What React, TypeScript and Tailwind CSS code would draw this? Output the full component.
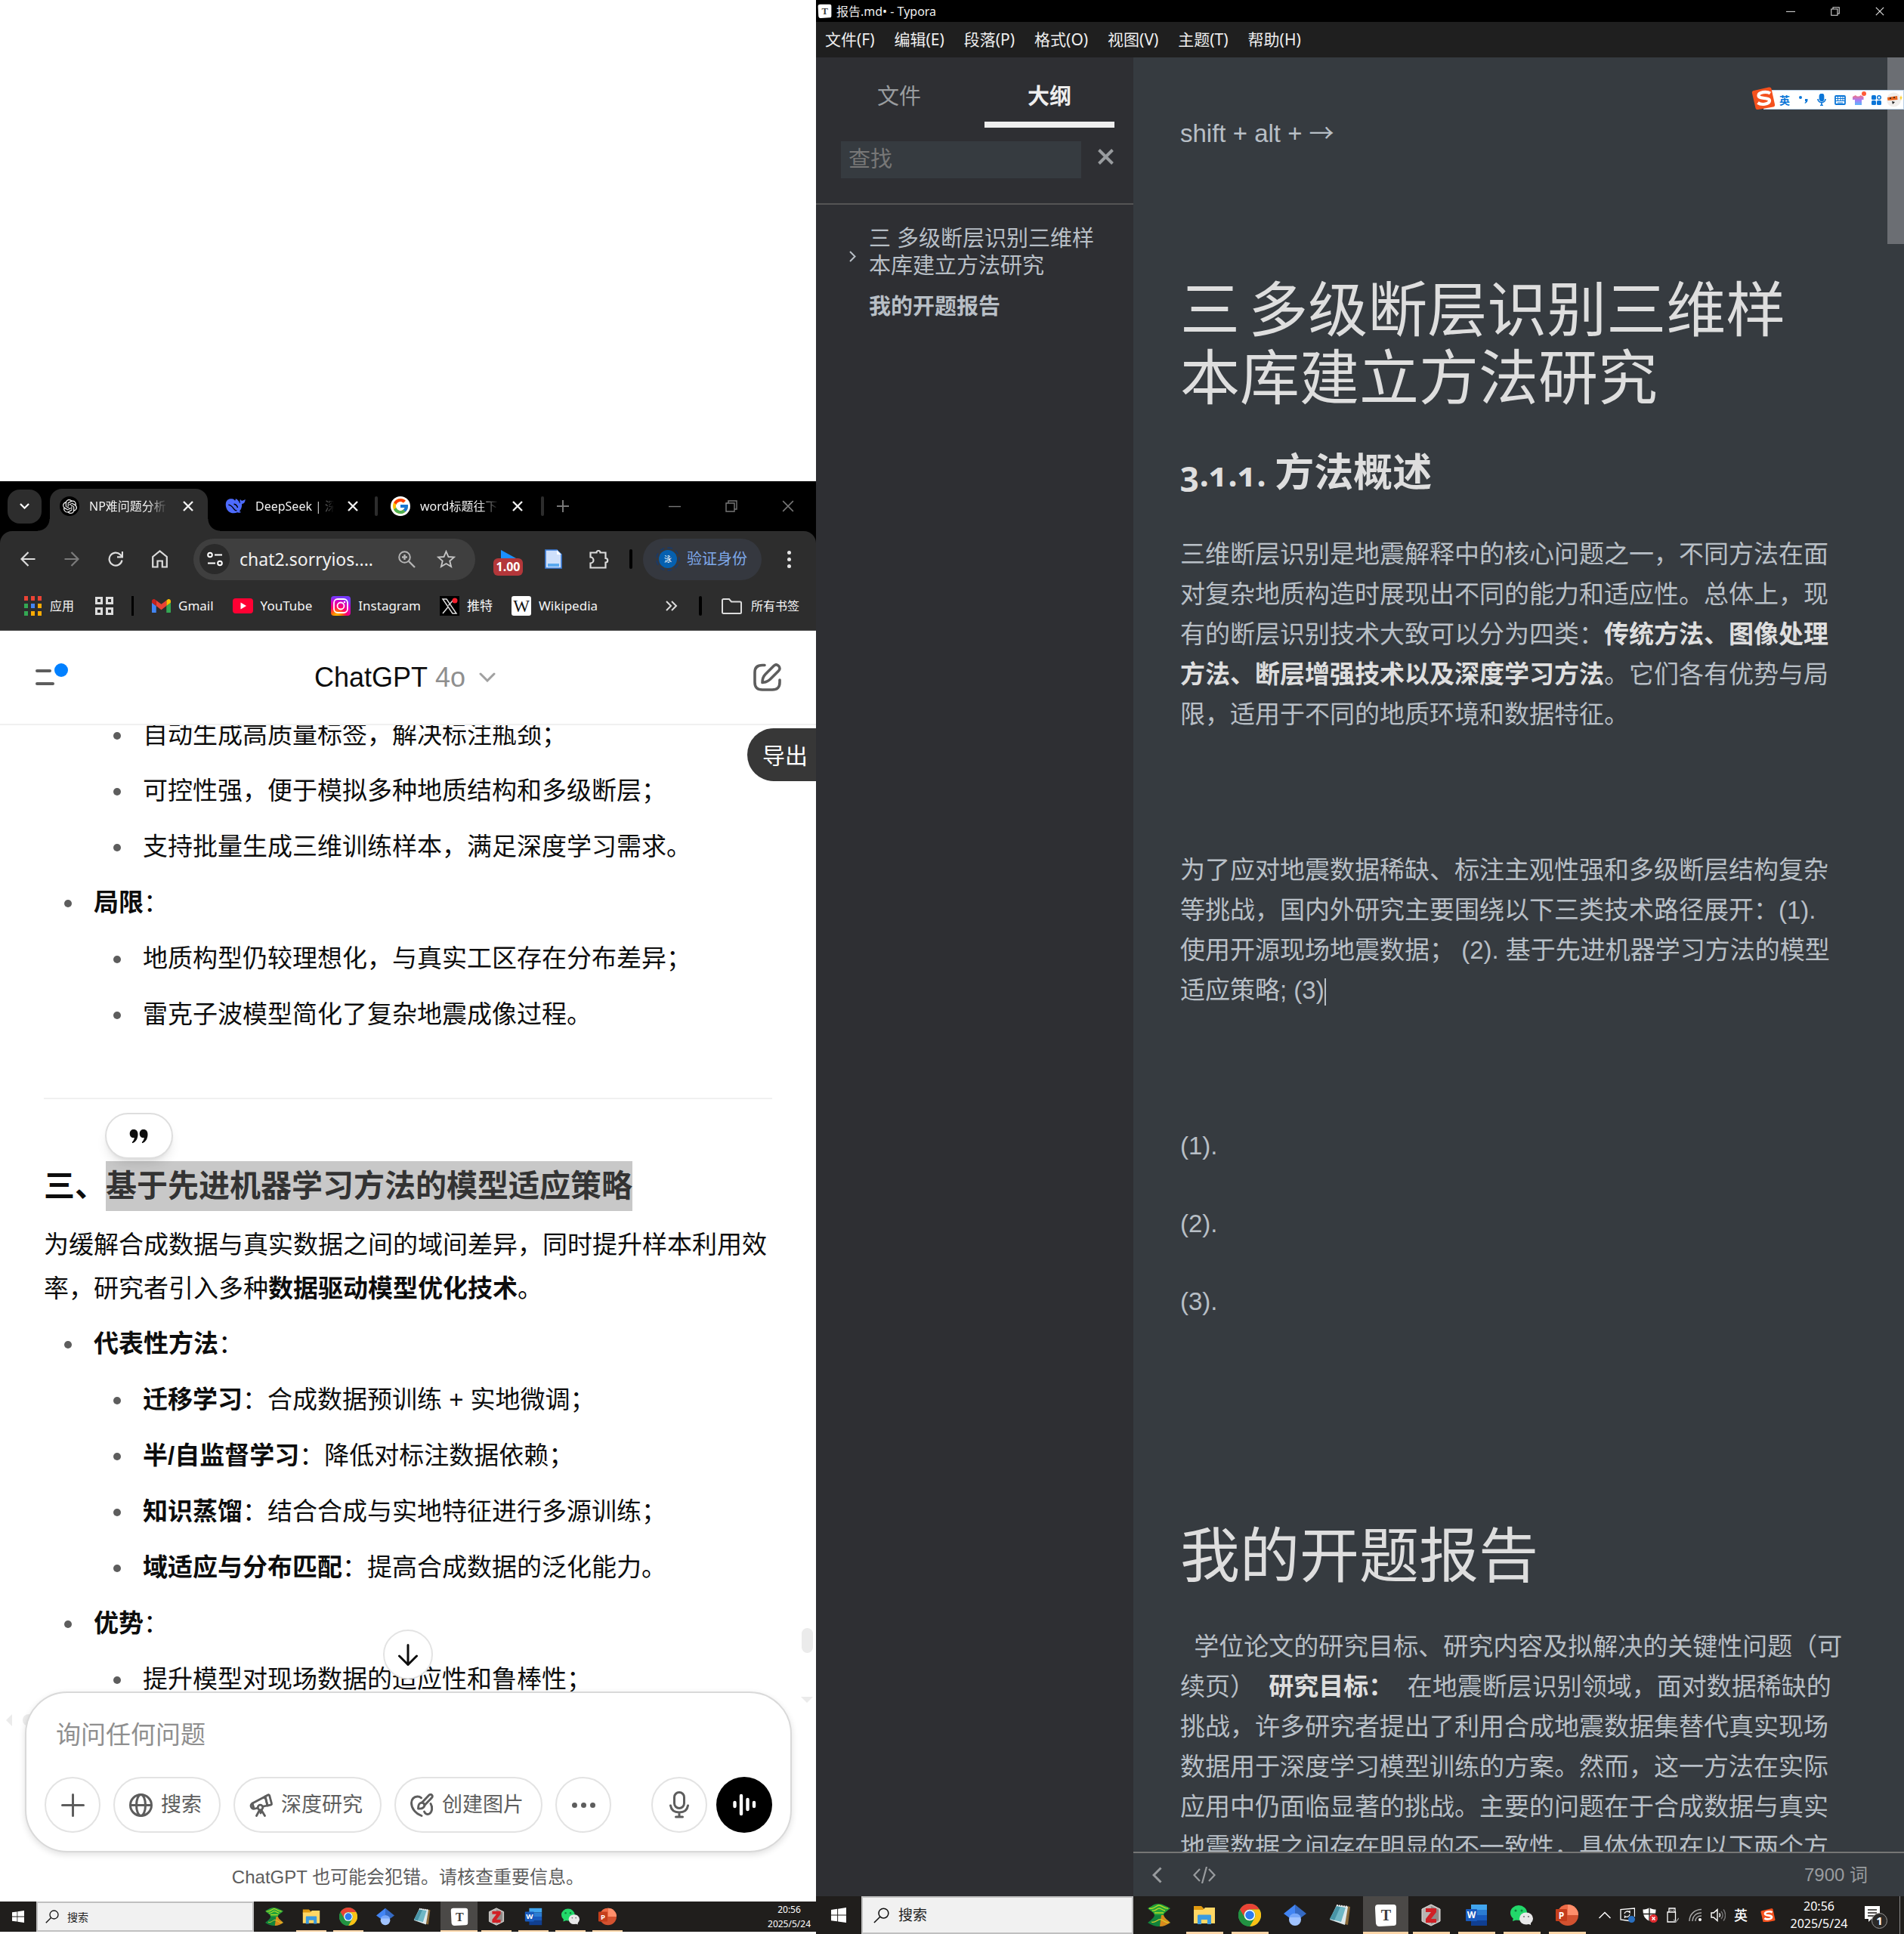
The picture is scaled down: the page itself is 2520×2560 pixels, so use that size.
import React from "react";
import { SiOpenai } from "react-icons/si";
import { FcGoogle } from "react-icons/fc";

const UI_FONT = "font-['Noto_Sans','Noto_Sans_CJK_SC',sans-serif]";
const BODY_FONT = "font-['Liberation_Sans','Noto_Sans_CJK_SC',sans-serif]";

type IconProps = { className?: string };

/* ---------- small line icons ---------- */

function CloseIcon({ className }: IconProps) {
  return (
    <svg viewBox="0 0 14 14" className={className} fill="none" stroke="currentColor">
      <path d="M1 1l12 12M13 1L1 13" />
    </svg>
  );
}

function MinimizeIcon({ className }: IconProps) {
  return (
    <svg viewBox="0 0 16 16" className={className} fill="none" stroke="currentColor">
      <path d="M0 8.500h16" strokeWidth="1.400" />
    </svg>
  );
}

function RestoreIcon({ className }: IconProps) {
  return (
    <svg viewBox="0 0 16 16" className={className} fill="none" stroke="currentColor" strokeWidth="1.400">
      <path d="M1 4h11v11H1zM4 4V1h11v11h-3" />
    </svg>
  );
}

function PlusIcon({ className }: IconProps) {
  return (
    <svg viewBox="0 0 16 16" className={className} fill="none" stroke="currentColor" strokeWidth="2">
      <path d="M8 0v16M0 8h16" />
    </svg>
  );
}

function ArrowIcon({ className }: IconProps) {
  return (
    <svg viewBox="0 0 20 20" className={className} fill="none" stroke="currentColor" strokeWidth="2.200">
      <path d="M19.500 10H1.500M10.500 1L1.500 10l9 9" />
    </svg>
  );
}

/* ---------- site and app logos ---------- */

function WhaleLogo({ className }: IconProps) {
  return (
    <svg viewBox="0 0 28 22" className={className}>
      <path
        fill="#4d6bfe"
        d="M1 7C2 2.500 6 .8 10.500 1.600c1.500.3 2.200 1.400 3 2.300.6-.8 1-1.600.7-2.600 1.900.3 3 1.500 3.800 2.700 1 .9 1.400 2 1.700 3.100.3.500.7.6 1 .2-.5-1.800-.5-3.300-.3-4.800C21.200 2.200 22 3.200 22.500 4c1.700-.2 3.200-1 5.200-2-.1 3.600-1.700 5.800-4.700 6.400.3 4.500-1.400 8-3.400 10l2.400 1.300c-2 .9-3.700.9-5.300.3-3.700 1.700-8.700 1.600-12-1.400C1.700 15.900.2 11 1 7z"
      />
      <path fill="none" stroke="#000" strokeWidth="1.500" d="M4.500 9.500c4 .5 6 3.500 7.500 5.700 1.200 1.700 2.300 2.500 4 2.300M12 8.500c3 .3 4.500 2.500 5.200 5" />
    </svg>
  );
}

function GmailLogo({ className }: IconProps) {
  return (
    <svg viewBox="0 0 24 18" className={className}>
      <path fill="#4285f4" d="M1.600 18H5.500V8.700L0 4.600v11.800C0 17.300.7 18 1.600 18z" />
      <path fill="#34a853" d="M18.500 18h3.900c.9 0 1.600-.7 1.600-1.600V4.600l-5.500 4.100z" />
      <path fill="#fbbc04" d="M18.500 1.600v7.100L24 4.600V2.500c0-2-2.300-3.200-3.900-2z" />
      <path fill="#ea4335" d="M5.500 8.700V1.600L12 6.500l6.500-4.900v7.100L12 13.600z" />
      <path fill="#c5221f" d="M0 2.500v2.100l5.500 4.100V1.600L3.900.5C2.300-.7 0 .5 0 2.500z" />
    </svg>
  );
}

function YouTubeLogo({ className }: IconProps) {
  return (
    <svg viewBox="0 0 27 20" className={className}>
      <rect width="27" height="20" rx="4" fill="#ff0033" />
      <path d="M10.500 5.500v9l7.500-4.500z" fill="#fff" />
    </svg>
  );
}

function InstagramLogo({ className }: IconProps) {
  return (
    <svg viewBox="0 0 26 26" className={className}>
      <defs>
        <radialGradient id="ig-warm" cx=".3" cy="1.050" r="1">
          <stop offset="0" stopColor="#ffd600" />
          <stop offset=".25" stopColor="#ff7a00" />
          <stop offset=".5" stopColor="#ff0069" />
          <stop offset=".8" stopColor="#d300c5" />
          <stop offset="1" stopColor="#7638fa" />
        </radialGradient>
      </defs>
      <rect width="26" height="26" rx="4" fill="url(#ig-warm)" />
      <rect x="4" y="4" width="18" height="18" rx="5" fill="none" stroke="#fff" strokeWidth="1.800" />
      <circle cx="13" cy="13" r="4.500" fill="none" stroke="#fff" strokeWidth="1.800" />
      <circle cx="18" cy="8" r="1.200" fill="#fff" />
    </svg>
  );
}

function XLogo({ className }: IconProps) {
  return (
    <svg viewBox="0 0 26 26" className={className}>
      <rect width="26" height="26" fill="#000" />
      <path d="M4 4h5l13 19h-5z" fill="none" stroke="#ddd" strokeWidth="1.500" />
      <path d="M19 4l-7.500 8.500M11 14.500L4 23" stroke="#ddd" strokeWidth="1.500" />
      <circle cx="20" cy="6" r="3.500" fill="#f4212e" />
    </svg>
  );
}

function WikipediaLogo({ className }: IconProps) {
  return (
    <svg viewBox="0 0 26 26" className={className}>
      <rect width="26" height="26" rx="3" fill="#fff" />
      <text x="13" y="21" textAnchor="middle" fontSize="23" fontFamily="Liberation Serif" fill="#111">
        W
      </text>
    </svg>
  );
}

/* ---------- task bar icons ---------- */

function HourglassApp() {
  return (
    <svg viewBox="0 0 30 30" className="size-full">
      <path d="M0 6C5 3 9 0 14 0s10 3 16 6c-3 3-8 5-9 9H9C8 11 3 9 0 6z" fill="#22a33a" />
      <path d="M9 15h12c1 4 6 7 9 10-6 3-10 5-15 5S5 28 0 25c4-3 8-6 9-10z" fill="#12833b" />
      <path d="M18 15h3c1 4 6 7 9 10-5 3-9 5-14 5z" fill="#d98a1c" />
      <path d="M2 6c6 2 9-4 13-4s7 5 12 4M6 9c5 1 6-3 9-3s5 3 8 3M9 12h12" fill="none" stroke="#b8d928" strokeWidth="1.400" />
      <path d="M5 24c6 2 8-5 13-3s5 4 10 4" fill="none" stroke="#d7cf2c" strokeWidth="1.200" />
    </svg>
  );
}

function ExplorerApp() {
  return (
    <svg viewBox="0 0 30 30" className="size-full">
      <path d="M1 3h10l3 3v4H1z" fill="#e09a10" />
      <path d="M1 8h12l3-3h13v21H1z" fill="#ffd765" />
      <path d="M6 27V16c0-1 .6-1.500 1.500-1.500h15c.9 0 1.500.5 1.500 1.500v11h-5v-6h-8v6z" fill="#3a9be0" />
    </svg>
  );
}

function ChromeApp() {
  return (
    <svg viewBox="0 0 30 30" className="size-full">
      <circle cx="15" cy="15" r="15" fill="#34a853" />
      <path d="M2 7.500A15 15 0 0 1 28 7.500H15a7.500 7.500 0 0 0-6.500 11.200z" fill="#ea4335" />
      <path d="M28 7.500A15 15 0 0 1 15 30l6.500-11.200A7.500 7.500 0 0 0 15 7.500z" fill="#fbc116" />
      <path d="M2 7.500l6.500 11.300a7.500 7.500 0 0 0 13 0L15 30A15 15 0 0 1 2 7.500z" fill="#229342" />
      <circle cx="15" cy="15" r="7.300" fill="#fff" />
      <circle cx="15" cy="15" r="5.800" fill="#2b7bf0" />
    </svg>
  );
}

function ScholarApp() {
  return (
    <svg viewBox="0 0 30 30" className="size-full">
      <path d="M15 1L0 13l8 6c1-4 4-6 7-6z" fill="#4285f4" />
      <path d="M15 1l15 12-8 6c-1-4-4-6-7-6z" fill="#356ac3" />
      <circle cx="15" cy="21" r="8" fill="#a0c3ff" />
      <path d="M7.500 18a8 8 0 0 1 15 0z" fill="#76a7fa" />
    </svg>
  );
}

function NotebookApp() {
  return (
    <svg viewBox="0 0 30 30" className="size-full">
      <path d="M24 3l4 1-3 24-4-1z" fill="#8a6a3a" />
      <path d="M10 2l15 2-4 24L1 21z" fill="#dfe9ec" />
      <path d="M10 3l12 2-6 19L1 20z" fill="#6fb7c6" />
      <path d="M10 3l5 1-8 18-6-2z" fill="#2f7f92" opacity=".6" />
      <path d="M10 2l15 2" stroke="#eee" strokeWidth="2" strokeDasharray="2 1" />
    </svg>
  );
}

function TyporaApp() {
  return (
    <svg viewBox="0 0 30 30" className="size-full">
      <path d="M6 1h19c3 0 4 1 4 4v20c0 3-1 4-4 4L7 30c-3 0-4-1-5-4L1 6c0-4 1-5 5-5z" fill="#fff" />
      <text x="15.500" y="22" textAnchor="middle" fontSize="20" fontFamily="Liberation Serif" fontWeight="700" fill="#3c3c3c">
        T
      </text>
    </svg>
  );
}

function ZoteroApp() {
  return (
    <svg viewBox="0 0 30 30" className="size-full">
      <path d="M15 1l12 6v16l-12 6-12-6V7z" fill="#b9b4b2" stroke="#e5e2e0" strokeWidth="1" />
      <path d="M15 3l10 5v14l-10 5z" fill="#8f8a88" />
      <path d="M8 6h14v5l-7 9h7v5H8v-5l7-9H8z" fill="#d12026" />
    </svg>
  );
}

function WordApp() {
  return (
    <svg viewBox="0 0 30 30" className="size-full">
      <path d="M8 1h21v7H8z" fill="#41a5ee" />
      <path d="M8 8h21v7H8z" fill="#2b7cd3" />
      <path d="M8 15h21v7H8z" fill="#185abd" />
      <path d="M8 22h21v7H8z" fill="#103f91" />
      <rect x="1" y="7" width="15" height="16" rx="1" fill="#185abd" />
      <text x="8.500" y="19" textAnchor="middle" fontSize="12" fontFamily="Open Sans" fontWeight="700" fill="#fff">
        W
      </text>
    </svg>
  );
}

function WeChatApp() {
  return (
    <svg viewBox="0 0 30 30" className="size-full">
      <ellipse cx="11" cy="12" rx="11" ry="10" fill="#22d86a" />
      <path d="M4 18l-1 5 6-2z" fill="#22d86a" />
      <circle cx="7" cy="9" r="1.500" fill="#11803c" />
      <circle cx="15" cy="9" r="1.500" fill="#11803c" />
      <ellipse cx="21" cy="19.500" rx="9" ry="8" fill="#e8e8e8" />
      <path d="M27 24v4l-5-2z" fill="#e8e8e8" />
      <circle cx="18" cy="17" r="1.100" fill="#777" />
      <circle cx="24" cy="17" r="1.100" fill="#777" />
    </svg>
  );
}

function PowerPointApp() {
  return (
    <svg viewBox="0 0 30 30" className="size-full">
      <circle cx="16" cy="15" r="14" fill="#d35230" />
      <path d="M16 1a14 14 0 0 1 14 14H16z" fill="#ff8f6b" />
      <path d="M16 1v14H2A14 14 0 0 1 16 1z" fill="#ed6c47" />
      <rect x="0" y="7" width="15" height="16" rx="1" fill="#c43e1c" />
      <text x="7.500" y="19.500" textAnchor="middle" fontSize="12" fontFamily="Open Sans" fontWeight="700" fill="#fff">
        P
      </text>
    </svg>
  );
}

function SogouLogo({ className }: IconProps) {
  return (
    <svg viewBox="0 0 32 30" className={className}>
      <path d="M3 5L23 .5c2-.4 3 .2 3.500 2L31 23c.4 2-.3 3-2 3.500L9 30c-2 .3-3-.3-3.500-2L1 8.500C.6 6.500 1.200 5.500 3 5z" fill="#f4511e" />
      <path
        d="M25 8.500C20 5.500 9.500 7 9.500 11.500c0 5 15 2 14.500 7C23.500 23 13 24.500 8.500 21"
        fill="none"
        stroke="#fff"
        strokeWidth="4.200"
      />
    </svg>
  );
}

function WindowsLogo({ className }: IconProps) {
  return (
    <svg viewBox="0 0 16 16" className={className} fill="#fff">
      <path d="M0 2.300L6.500 1.400v6.200H0zM7.300 1.300L16 0v7.600H7.300zM0 8.400h6.500v6.200L0 13.700zM7.300 8.400H16V16l-8.700-1.200z" />
    </svg>
  );
}

const taskApps = [
  { name: "沙漏", Icon: HourglassApp, open: false, active: false },
  { name: "文件资源管理器", Icon: ExplorerApp, open: true, active: false },
  { name: "Chrome", Icon: ChromeApp, open: true, active: false },
  { name: "Scholar", Icon: ScholarApp, open: false, active: false },
  { name: "记事本", Icon: NotebookApp, open: false, active: false },
  { name: "Typora", Icon: TyporaApp, open: true, active: true },
  { name: "Zotero", Icon: ZoteroApp, open: true, active: false },
  { name: "Word", Icon: WordApp, open: true, active: false },
  { name: "微信", Icon: WeChatApp, open: true, active: false },
  { name: "PowerPoint", Icon: PowerPointApp, open: true, active: false },
];

function Taskbar({ large = false, children }: { large?: boolean; children: React.ReactNode }) {
  const bar = large ? "h-[50px]" : "mb-[3px] h-10";
  const start = large ? "w-[60px]" : "w-12";
  const box = large ? "w-[360px] gap-3 pl-[14px] text-[19px]" : "w-[288px] gap-[11px] pl-[10px] text-[14px]";
  const apps = large ? "ml-1" : "ml-[2px]";
  const slot = large ? "w-[60px]" : "w-[49px]";
  const glyph = large ? "size-[30px]" : "size-6";
  const mark = large ? "h-[3px] w-[49px]" : "h-[2px] w-10";
  return (
    <footer className={`${UI_FONT} ${bar} flex shrink-0 bg-[#201e1c] text-white`}>
      <button aria-label="开始" className={`${start} flex shrink-0 items-center justify-center`}>
        <WindowsLogo className={large ? "size-5" : "size-4"} />
      </button>
      <label className={`${box} flex shrink-0 items-center border-2 border-[#c0c0c0] bg-[#f1f1f1] text-[#222]`}>
        <svg viewBox="0 0 18 18" className={large ? "size-[21px] shrink-0" : "size-[18px] shrink-0"} fill="none" stroke="#111" strokeWidth="1.300">
          <circle cx="11.500" cy="6.500" r="5.500" />
          <path d="M7.500 10.500L.8 17.200" />
        </svg>
        <input aria-label="搜索" placeholder="搜索" className="w-full min-w-0 bg-transparent outline-none placeholder:text-[#222]" />
      </label>
      <nav className={`${apps} flex`}>
        {taskApps.map(({ name, Icon, open, active }) => (
          <button
            key={name}
            aria-label={name}
            className={`${slot} relative flex items-center justify-center ${active ? "bg-[#4b4947]" : ""}`}
          >
            <span className={glyph}>
              <Icon />
            </span>
            {open && <span className={`${active ? (large ? "h-[3px] w-full" : "h-[2px] w-full") : mark} absolute bottom-0 bg-[#fcd5a8]`} />}
          </button>
        ))}
      </nav>
      {children}
    </footer>
  );
}

/* ---------- browser window ---------- */

function TabTitle({ children }: { children: React.ReactNode }) {
  return (
    <span className="ml-[13px] w-[104px] overflow-hidden whitespace-nowrap [mask-image:linear-gradient(to_right,black_75%,transparent)]">
      {children}
    </span>
  );
}

function TabStrip() {
  return (
    <div className="flex h-[66px] items-center bg-black text-[16px] text-[#f1f1f1]">
      <button aria-label="搜索标签页" className="ml-[10px] flex size-[45px] items-center justify-center rounded-2xl bg-[#2d2d2d]">
        <svg viewBox="0 0 14 9" className="w-[13px]" fill="none" stroke="#fff" strokeWidth="2.400">
          <path d="M1 1l6 6 6-6" />
        </svg>
      </button>
      <div className="relative ml-[11px] flex h-14 w-[209px] items-center self-end rounded-t-2xl bg-[#2d2d2d] pb-[10px] pl-[13px]">
        <span className="absolute bottom-0 -left-4 size-4 bg-[radial-gradient(circle_at_0_0,transparent_15px,#2d2d2d_16px)]" />
        <span className="absolute -right-4 bottom-0 size-4 bg-[radial-gradient(circle_at_100%_0,transparent_15px,#2d2d2d_16px)]" />
        <span className="flex size-[26px] shrink-0 items-center justify-center rounded-full bg-black">
          <SiOpenai className="size-[19px]" />
        </span>
        <TabTitle>NP难问题分析</TabTitle>
        <button aria-label="关闭" className="ml-5">
          <CloseIcon className="size-[14px] stroke-[2.4]" />
        </button>
      </div>
      <div className="flex items-center pl-[23px]">
        <WhaleLogo className="w-[27px]" />
        <TabTitle>DeepSeek | 深</TabTitle>
        <button aria-label="关闭" className="ml-[18px]">
          <CloseIcon className="size-[14px] stroke-[2.4]" />
        </button>
      </div>
      <span className="ml-[22px] h-[26px] w-1 rounded bg-[#2d2d2d]" />
      <div className="flex items-center pl-[17px]">
        <span className="flex size-[26px] items-center justify-center rounded-full bg-white">
          <FcGoogle className="size-6" />
        </span>
        <TabTitle>word标题往下</TabTitle>
        <button aria-label="关闭" className="ml-[18px]">
          <CloseIcon className="size-[14px] stroke-[2.4]" />
        </button>
      </div>
      <span className="ml-6 h-[26px] w-1 rounded bg-[#2d2d2d]" />
      <button aria-label="新标签页" className="ml-[17px] text-[#777]">
        <PlusIcon className="size-4" />
      </button>
      <div className="mr-[29px] ml-auto flex items-center gap-[59px] text-[#777]">
        <button aria-label="最小化">
          <MinimizeIcon className="size-4" />
        </button>
        <button aria-label="还原">
          <RestoreIcon className="size-4" />
        </button>
        <button aria-label="关闭窗口">
          <CloseIcon className="size-4 stroke-[1.3]" />
        </button>
      </div>
    </div>
  );
}

function Toolbar() {
  return (
    <div className="flex h-[74px] items-center text-[#dcdcdc]">
      <div className="ml-[27px] flex items-center gap-[38px]">
        <button aria-label="后退">
          <ArrowIcon className="size-5" />
        </button>
        <button aria-label="前进" className="text-[#7b7b7b]">
          <ArrowIcon className="size-5 rotate-180" />
        </button>
        <button aria-label="重新加载">
          <svg viewBox="0 0 20 20" className="size-5" fill="none" stroke="currentColor" strokeWidth="2.200">
            <path d="M18.500 11.500A8.500 8.500 0 1 1 16.300 4.200L19 7" />
            <path d="M19 0v7.300h-7" />
          </svg>
        </button>
        <button aria-label="主页">
          <svg viewBox="0 0 21 24" className="h-6 w-[21px]" fill="none" stroke="currentColor" strokeWidth="2.200">
            <path d="M1.200 9L10.500 1.500 19.800 9v13.500h-6v-8H7.500v8H1.200z" />
          </svg>
        </button>
      </div>
      <div className="ml-[34px] flex h-[55px] flex-1 items-center rounded-full bg-[#3f3f3f] pr-[26px] pl-2">
        <button aria-label="网站信息" className="flex size-10 shrink-0 items-center justify-center rounded-full bg-[#2a2a2a]">
          <svg viewBox="0 0 21 20" className="w-[21px]" fill="none" stroke="#fff" strokeWidth="2">
            <circle cx="4" cy="4.500" r="2.800" />
            <path d="M10 4.500h10M1 15.500h10" />
            <circle cx="17" cy="15.500" r="2.800" />
          </svg>
        </button>
        <input
          aria-label="地址栏"
          defaultValue="chat2.sorryios...."
          className="ml-[13px] w-full min-w-0 bg-transparent text-[23px] text-[#f1f1f1] outline-none"
        />
        <button aria-label="缩放" className="text-[#b5b5b5]">
          <svg viewBox="0 0 23 23" className="w-[23px]" fill="none" stroke="currentColor" strokeWidth="2">
            <circle cx="8.500" cy="8.500" r="7.300" />
            <path d="M14 14l8 8M8.500 5v7M5 8.500h7" strokeWidth="2.400" />
          </svg>
        </button>
        <button aria-label="收藏" className="ml-7 text-[#c5c5c5]">
          <svg viewBox="0 0 25 24" className="w-[25px]" fill="none" stroke="currentColor" strokeWidth="1.900">
            <path d="M12.500 2l3 7 7.500.6-5.700 5 1.800 7.400-6.600-4-6.600 4 1.800-7.400-5.700-5L9.500 9z" />
          </svg>
        </button>
      </div>
      <div className="mt-[9px] ml-[22px] flex w-[43px] flex-col items-center">
        <svg viewBox="0 0 20 11" className="h-[11px] w-5">
          <path d="M0 0l20 11H0z" fill="#1a90ff" />
        </svg>
        <span className="h-[23px] rounded-md bg-[#b3373a] px-1 text-[16px] leading-[23px] font-bold text-white">1.00</span>
      </div>
      <svg viewBox="0 0 23 26" className="ml-[27px] w-[23px]">
        <path d="M1 1h15l6 6v18H1z" fill="#cfe0fb" stroke="#3d7fdb" strokeWidth="1.600" />
        <path d="M16 1l6 6h-6z" fill="#fff" />
        <path d="M4 19h15v4H4z" fill="#5aa9f0" />
      </svg>
      <button aria-label="扩展程序" className="ml-9">
        <svg viewBox="0 0 26 26" className="w-[26px]" fill="none" stroke="currentColor" strokeWidth="2.200">
          <path d="M2 4.500h7.500a2.500 2.500 0 0 1 5 0H21.500v7.500a2.700 2.700 0 0 1 0 5.500V24.500H1.500v-6a4 4 0 0 0 0-8v-6z" />
        </svg>
      </button>
      <span className="ml-[27px] h-[26px] w-1 rounded bg-black" />
      <button className="ml-[14px] flex h-[55px] w-[157px] items-center rounded-full bg-[#35383f] pl-[17px] text-[20px] text-[#7fa9ea]">
        <span className="flex size-8 items-center justify-center rounded-full border-2 border-dashed border-[#1b3a66]">
          <span className="flex size-6 items-center justify-center rounded-full bg-[#0560b0] text-[10px] text-white">泳</span>
        </span>
        <span className="ml-[9px] whitespace-nowrap">验证身份</span>
      </button>
      <button aria-label="菜单" className="mr-[33px] ml-[34px] flex flex-col gap-1">
        <span className="size-[5px] rounded-full bg-[#e5e5e5]" />
        <span className="size-[5px] rounded-full bg-[#e5e5e5]" />
        <span className="size-[5px] rounded-full bg-[#e5e5e5]" />
      </button>
    </div>
  );
}

const appDots = [
  "bg-[#ea4335]", "bg-[#ea4335]", "bg-[#ea4335]",
  "bg-[#34a853]", "bg-[#4285f4]", "bg-[#fbab04]",
  "bg-[#34a853]", "bg-[#fbab04]", "bg-[#fbab04]",
];

const bookmarks = [
  { label: "Gmail", icon: <GmailLogo className="w-[25px]" /> },
  { label: "YouTube", icon: <YouTubeLogo className="w-[27px]" /> },
  { label: "Instagram", icon: <InstagramLogo className="w-[26px]" /> },
  { label: "推特", icon: <XLogo className="w-[26px]" /> },
  { label: "Wikipedia", icon: <WikipediaLogo className="w-[26px]" /> },
];

function BookmarksBar() {
  return (
    <div className="mb-[7px] flex h-[50px] items-center pr-[22px] pl-8 text-[16px] whitespace-nowrap text-[#f5f5f5]">
      <a href="#apps" className="flex items-center gap-[11px]">
        <span className="grid grid-cols-3 gap-[4px]">
          {appDots.map((dot, i) => (
            <span key={i} className={`h-[6px] w-[5px] ${dot}`} />
          ))}
        </span>
        应用
      </a>
      <button aria-label="标签页分组" className="ml-7 grid grid-cols-2 gap-1">
        <span className="size-[10px] border-[3px] border-[#dcdcdc]" />
        <span className="size-[10px] border-[3px] border-[#dcdcdc]" />
        <span className="size-[10px] border-[3px] border-[#dcdcdc]" />
        <span className="size-[10px] border-[3px] border-[#dcdcdc]" />
      </button>
      <span className="mr-6 ml-6 h-[26px] w-[3px] bg-black" />
      <div className="flex items-center gap-[25px] text-[17px]">
        {bookmarks.map((b) => (
          <a key={b.label} href={`#${b.label}`} className="flex items-center gap-[10px]">
            {b.icon}
            {b.label}
          </a>
        ))}
      </div>
      <button aria-label="更多书签" className="ml-auto">
        <svg viewBox="0 0 16 14" className="w-4" fill="none" stroke="#dcdcdc" strokeWidth="2">
          <path d="M1 1l6 6-6 6M8 1l6 6-6 6" />
        </svg>
      </button>
      <span className="mr-[26px] ml-[28px] h-[26px] w-1 rounded bg-black" />
      <a href="#all" className="flex items-center gap-3">
        <svg viewBox="0 0 27 21" className="w-[27px]" fill="none" stroke="#dcdcdc" strokeWidth="2">
          <path d="M2.500 1h7.500l3 3.500h11.500c.9 0 1.500.6 1.500 1.500v12.500c0 .9-.6 1.500-1.500 1.500h-22C1.600 20 1 19.400 1 18.500v-16C1 1.600 1.600 1 2.500 1z" />
        </svg>
        所有书签
      </a>
    </div>
  );
}

function ChatHeader() {
  return (
    <header className="grid h-[125px] shrink-0 grid-cols-[1fr_auto_1fr] items-center border-b-2 border-[#f0f0f0] bg-white px-[46px]">
      <button aria-label="打开边栏" className="relative flex w-11 flex-col gap-[13px] py-2 pl-px">
        <span className="h-1 w-[21px] rounded bg-[#5d5d5d]" />
        <span className="h-1 w-[25px] rounded bg-[#5d5d5d]" />
        <span className="absolute top-0 right-0 size-[18px] rounded-full bg-[#0180ff]" />
      </button>
      <button className="flex items-center gap-[10px] pr-2 text-[36px] text-[#0d0d0d]">
        ChatGPT <span className="text-[#8f8f8f]">4o</span>
        <svg viewBox="0 0 22 13" className="ml-2 w-[22px]" fill="none" stroke="#a0a0a0" strokeWidth="3" strokeLinecap="round">
          <path d="M2 2l9 9 9-9" />
        </svg>
      </button>
      <button aria-label="新聊天" className="justify-self-end">
        <svg viewBox="0 0 37 37" className="w-[37px]" fill="none" stroke="#5d5d5d" strokeWidth="3.600" strokeLinecap="round" strokeLinejoin="round">
          <path d="M15 2.500H12C5 2.500 2 5.500 2 12v13c0 7 3 10 10 10h13c7 0 10-3 10-10v-3" />
          <path d="M12 25.500c0-6 1.500-8.500 4-11L27 3.500c2-2 4.500-2 6.500 0s2 4.500 0 6.500L22.500 21c-2.500 2.500-4.500 4-10.500 4.500z" />
        </svg>
      </button>
    </header>
  );
}

function Bullet({ nested = false, children }: { nested?: boolean; children: React.ReactNode }) {
  return (
    <li className={`${nested ? "pl-[92px]" : "pl-[27px]"} flex gap-[29px]`}>
      <span className="mt-[25px] size-[10px] shrink-0 rounded-full bg-[#5d5d5d]" />
      <span>{children}</span>
    </li>
  );
}

function ChatMessages() {
  return (
    <article className="-mt-4 flex flex-col px-[58px] text-[33px] leading-[58px] text-[#0d0d0d]">
      <ul className="flex flex-col gap-4">
        <Bullet nested>自动生成高质量标签，解决标注瓶颈；</Bullet>
        <Bullet nested>可控性强，便于模拟多种地质结构和多级断层；</Bullet>
        <Bullet nested>支持批量生成三维训练样本，满足深度学习需求。</Bullet>
        <Bullet>
          <strong>局限</strong>：
        </Bullet>
        <Bullet nested>地质构型仍较理想化，与真实工区存在分布差异；</Bullet>
        <Bullet nested>雷克子波模型简化了复杂地震成像过程。</Bullet>
      </ul>
      <hr className="mt-[81px] border-t-2 border-[#f0f0f0]" />
      <h3 className="relative mt-[82px] text-[41px] leading-[66px] font-bold">
        三、<mark className="inline-block bg-[#c8c8c8] text-[#333]">基于先进机器学习方法的模型适应策略</mark>
        <button
          aria-label="引用"
          className="absolute -top-16 left-[81px] flex h-[61px] w-[90px] items-center justify-center rounded-full border-2 border-[#dedede] bg-white shadow-lg"
        >
          <svg viewBox="0 0 26 20" className="w-[26px]" fill="#0d0d0d">
            <path d="M6 1c3.500 0 5.500 2.500 5.500 6.500 0 6-3 10-6.500 11.500-1 .4-1.500-.8-.8-1.500C5.500 16 6.500 14.500 6.800 12 3 12.500.7 10 .7 6.500.7 3 3 1 6 1zM19 1c3.500 0 5.500 2.500 5.500 6.500 0 6-3 10-6.500 11.500-1 .4-1.500-.8-.8-1.500 1.300-1.500 2.300-3 2.600-5.500-3.800.5-6.100-2-6.100-5.500C13.700 3 16 1 19 1z" />
          </svg>
        </button>
      </h3>
      <p className="mt-4">
        为缓解合成数据与真实数据之间的域间差异，同时提升样本利用效率，研究者引入多种<strong>数据驱动模型优化技术</strong>。
      </p>
      <ul className="mt-[15px] flex flex-col gap-4">
        <Bullet>
          <strong>代表性方法</strong>：
        </Bullet>
        <Bullet nested>
          <strong>迁移学习</strong>：合成数据预训练 + 实地微调；
        </Bullet>
        <Bullet nested>
          <strong>半/自监督学习</strong>：降低对标注数据依赖；
        </Bullet>
        <Bullet nested>
          <strong>知识蒸馏</strong>：结合合成与实地特征进行多源训练；
        </Bullet>
        <Bullet nested>
          <strong>域适应与分布匹配</strong>：提高合成数据的泛化能力。
        </Bullet>
        <Bullet>
          <strong>优势</strong>：
        </Bullet>
        <Bullet nested>提升模型对现场数据的适应性和鲁棒性；</Bullet>
      </ul>
    </article>
  );
}

const toolIcon = "size-[31px] shrink-0";

function GlobeIcon() {
  return (
    <svg viewBox="0 0 31 31" className={toolIcon} fill="none" stroke="currentColor" strokeWidth="3">
      <circle cx="15.500" cy="15.500" r="14" />
      <ellipse cx="15.500" cy="15.500" rx="6" ry="14" />
      <path d="M1.500 15.500h28" />
    </svg>
  );
}

function TelescopeIcon() {
  return (
    <svg viewBox="0 0 31 31" className={toolIcon} fill="none" stroke="currentColor" strokeWidth="2.800" strokeLinecap="round" strokeLinejoin="round">
      <path d="M21 4l3.500-2c1-.5 1.800-.2 2.200.8l2.800 10.500c.3 1-.2 1.700-1.200 1.900L24 16z" />
      <path d="M21 4L5 12.500c-2.500 1.300-3.500 3-2.600 5.300.9 2.400 2.800 3 5.600 2.200l3-.8M24 16l-6 1.200M21 4l3 12" />
      <path d="M4 13l2 6.500" />
      <circle cx="14.500" cy="18.500" r="3.300" />
      <path d="M13.500 22L9.500 29.500M16 22l4.500 7.500M15 23v3" />
    </svg>
  );
}

function BrushIcon() {
  return (
    <svg viewBox="0 0 31 31" className={toolIcon} fill="none" stroke="currentColor" strokeWidth="2.900" strokeLinecap="round" strokeLinejoin="round">
      <path d="M15 29.500C6 26 1.500 19 1.500 12.500c0-5 3.500-8.500 8-8.500 2 0 3.600.6 5 1.800" />
      <path d="M10.500 20c0-5 1-7.500 5-8l9-9.500c1.200-1.300 3-1.500 4-.5s.8 2.700-.4 4L19 15.500c-.5 3.500-3 5-8.500 4.500z" />
      <path d="M15.500 12c2 .5 3.200 1.700 3.500 3.500" />
      <path d="M27 13.500c2.500 4 2.500 11-2 13.500-3 1.500-5.500-.5-6.500-3" />
    </svg>
  );
}

const pill = "flex h-[74px] items-center justify-center rounded-full border-2 border-[#e3e3e3] text-[#5d5d5d]";

function Composer() {
  return (
    <div className="relative shrink-0">
      <span className="absolute top-[30px] left-2 border-y-8 border-r-8 border-y-transparent border-r-[#ebebeb]" />
      <span className="absolute top-[30px] left-[30px] size-4 rounded-full bg-[#ebebeb]" />
      <span className="absolute top-[7px] right-1 border-x-8 border-t-8 border-x-transparent border-t-[#ebebeb]" />
      <form className="relative mr-8 ml-[33px] rounded-[56px] border-2 border-[#d9d9d9] bg-white px-6 pt-[27px] pb-6 shadow-[0_3px_8px_rgba(0,0,0,0.12)]">
        <input
          aria-label="消息"
          placeholder="询问任何问题"
          className="mb-[26px] block h-[58px] w-full pl-[15px] text-[33px] outline-none placeholder:text-[#8f8f8f]"
        />
        <div className="flex items-center gap-[17px] text-[27px] whitespace-nowrap">
          <button type="button" aria-label="添加" className={`${pill} w-[74px]`}>
            <svg viewBox="0 0 31 31" className={toolIcon} fill="none" stroke="currentColor" strokeWidth="3" strokeLinecap="round">
              <path d="M15.500 1.500v28M1.500 15.500h28" />
            </svg>
          </button>
          <button type="button" className={`${pill} gap-[11px] pr-[23px] pl-[19px]`}>
            <GlobeIcon />
            搜索
          </button>
          <button type="button" className={`${pill} gap-[11px] pr-[23px] pl-[19px]`}>
            <TelescopeIcon />
            深度研究
          </button>
          <button type="button" className={`${pill} gap-[11px] pr-[23px] pl-[19px]`}>
            <BrushIcon />
            创建图片
          </button>
          <button type="button" aria-label="更多" className={`${pill} w-[74px] gap-[5px]`}>
            <span className="size-[7px] rounded-full bg-[#5d5d5d]" />
            <span className="size-[7px] rounded-full bg-[#5d5d5d]" />
            <span className="size-[7px] rounded-full bg-[#5d5d5d]" />
          </button>
          <div className="ml-auto flex gap-3">
            <button type="button" aria-label="听写" className={`${pill} w-[74px]`}>
              <svg viewBox="0 0 26 36" className="w-[26px]" fill="none" stroke="currentColor" strokeWidth="3" strokeLinecap="round">
                <rect x="6.500" y="1.500" width="13" height="21" rx="6.500" />
                <path d="M1.500 19c1 6 5.500 9 11.500 9s10.500-3 11.500-9M13 28v5M8.500 34h9" />
              </svg>
            </button>
            <button type="button" aria-label="语音模式" className="flex size-[74px] items-center justify-center rounded-full bg-black">
              <svg viewBox="0 0 32 30" className="w-8" fill="none" stroke="#fff" strokeWidth="4.400" strokeLinecap="round">
                <path d="M3.500 12v5M12 3v24M20.500 8v13M29 12v5" />
              </svg>
            </button>
          </div>
        </div>
      </form>
      <p className="text-center text-[24px] leading-[65px] text-[#5d5d5d]">ChatGPT 也可能会犯错。请核查重要信息。</p>
    </div>
  );
}

function BrowserWindow() {
  return (
    <section className="flex min-h-0 flex-1 flex-col">
      <div className={`${UI_FONT} shrink-0 bg-black`}>
        <TabStrip />
        <div className="rounded-t-2xl border-b border-[#555] bg-[#2d2d2d]">
          <Toolbar />
          <BookmarksBar />
        </div>
      </div>
      <div className={`${BODY_FONT} flex min-h-0 flex-1 flex-col bg-white`}>
        <ChatHeader />
        <div className="relative min-h-0 flex-1">
          <div className="h-full overflow-hidden">
            <ChatMessages />
          </div>
          <button className="absolute top-1 right-0 h-[70px] w-[91px] rounded-l-full bg-[#373737] pt-[2px] pl-[9px] text-[30px] text-white">导出</button>
          <button
            aria-label="滚动到底部"
            className="absolute bottom-4 left-1/2 flex size-[66px] -translate-x-1/2 items-center justify-center rounded-full border-2 border-[#e3e3e3] bg-white"
          >
            <svg viewBox="0 0 26 29" className="w-[26px]" fill="none" stroke="#0d0d0d" strokeWidth="3" strokeLinecap="round" strokeLinejoin="round">
              <path d="M13 1.500v26M1.500 16L13 27.500 24.500 16" />
            </svg>
          </button>
          <span className="absolute right-1 bottom-[51px] h-[33px] w-[15px] rounded-full bg-[#ebebeb]" />
        </div>
        <Composer />
      </div>
    </section>
  );
}

/* ---------- Typora window ---------- */

const menus = ["文件(F)", "编辑(E)", "段落(P)", "格式(O)", "视图(V)", "主题(T)", "帮助(H)"];

function Outline() {
  return (
    <aside className="w-[420px] shrink-0 bg-[#2e2f33] text-[29px] text-[#b8bfc6]">
      <div role="tablist" className="grid grid-cols-2 gap-[27px] pt-[19px] pr-[25px] pl-6 text-center leading-[66px]">
        <button role="tab" aria-selected="false" className="border-b-8 border-transparent text-[#999c9f]">
          文件
        </button>
        <button role="tab" aria-selected="true" className="border-b-8 border-[#eee] font-bold text-[#eee]">
          大纲
        </button>
      </div>
      <div className="flex items-center border-b-2 border-[#555] pt-[18px] pr-[26px] pb-[33px] pl-[33px]">
        <input
          aria-label="查找"
          placeholder="查找"
          className="h-[49px] w-[318px] bg-[#363b40] px-[10px] outline-none placeholder:text-[#777]"
        />
        <button aria-label="清除" className="mb-2 ml-[22px] text-[#999c9f]">
          <CloseIcon className="size-[21px] stroke-[2.6]" />
        </button>
      </div>
      <ul className="flex flex-col gap-[18px] pt-[27px] pr-8 pl-11 leading-9">
        <li className="flex items-center">
          <svg viewBox="0 0 9 15" className="mt-[11px] mr-[17px] w-[9px] shrink-0" fill="none" stroke="currentColor" strokeWidth="2">
            <path d="M1 1l6.500 6.500L1 14" />
          </svg>
          <a href="#section">三 多级断层识别三维样本库建立方法研究</a>
        </li>
        <li className="pl-[26px] font-bold">
          <a href="#report">我的开题报告</a>
        </li>
      </ul>
    </aside>
  );
}

const headingClass = "pt-2 font-['Lato','Noto_Sans_CJK_SC',sans-serif] text-[79px] leading-[90px] text-[#dedede]";

function Document() {
  return (
    <div className="relative min-h-0 flex-1 overflow-hidden">
      <div className="flex flex-col gap-[50px] pt-[74px] pr-[78px] pl-[62px] text-[33px] leading-[53px] text-[#b8bfc6]">
        <p>
          shift + alt + <span className="font-['Noto_Sans_CJK_SC',sans-serif] leading-none">→</span>
        </p>
        <p>&nbsp;</p>
        <h1 id="section" className={headingClass}>
          三<span className="text-[44px] leading-none"> </span>多级断层识别三维样本库建立方法研究
        </h1>
        <h3 className="font-['Open_Sans','Noto_Sans_CJK_SC',sans-serif] text-[52px] leading-[60px] font-bold text-[#dedede]">
          <span className="text-[44px] oldstyle-nums">3.1.1. </span>方法概述
        </h3>
        <p>
          三维断层识别是地震解释中的核心问题之一，不同方法在面对复杂地质构造时展现出不同的能力和适应性。总体上，现有的断层识别技术大致可以分为四类：
          <strong className="text-[#dedede]">传统方法、图像处理方法、断层增强技术以及深度学习方法</strong>
          。它们各有优势与局限，适用于不同的地质环境和数据特征。
        </p>
        <p>&nbsp;</p>
        <p>
          为了应对地震数据稀缺、标注主观性强和多级断层结构复杂等挑战，国内外研究主要围绕以下三类技术路径展开：(1). 使用开源现场地震数据； (2).
          基于先进机器学习方法的模型适应策略; (3)
          <span className="inline-block h-9 w-[2px] bg-[#b8bfc6] align-middle" />
        </p>
        <p>&nbsp;</p>
        <p>(1).</p>
        <p>(2).</p>
        <p>(3).</p>
        <p>&nbsp;</p>
        <p>&nbsp;</p>
        <h1 id="report" className={headingClass}>
          我的开题报告
        </h1>
        <p>
          &nbsp;&nbsp;学位论文的研究目标、研究内容及拟解决的关键性问题（可续页）&nbsp;&nbsp;
          <strong className="text-[#dedede]">研究目标：</strong>
          &nbsp;&nbsp;在地震断层识别领域，面对数据稀缺的挑战，许多研究者提出了利用合成地震数据集替代真实现场数据用于深度学习模型训练的方案。然而，这一方法在实际应用中仍面临显著的挑战。主要的问题在于合成数据与真实地震数据之间存在明显的不一致性，具体体现在以下两个方面。
        </p>
      </div>
      <span className="absolute top-0 right-0 h-[247px] w-[22px] bg-[#6b6e73]" />
    </div>
  );
}

function TyporaWindow() {
  return (
    <section className="flex min-h-0 flex-1 flex-col bg-[#363b40]">
      <div className={`${UI_FONT} flex h-[29px] shrink-0 items-center bg-black pr-[26px] pl-[2px] text-[16px] text-[#eee]`}>
        <span className="mr-[6px] size-[19px]">
          <TyporaApp />
        </span>
        报告.md• - Typora
        <div className="ml-auto flex items-center gap-[47px] text-[#ddd]">
          <button aria-label="最小化">
            <MinimizeIcon className="size-3" />
          </button>
          <button aria-label="还原">
            <RestoreIcon className="size-3" />
          </button>
          <button aria-label="关闭窗口">
            <CloseIcon className="size-3 stroke-[1.4]" />
          </button>
        </div>
      </div>
      <nav className={`${UI_FONT} flex h-[47px] shrink-0 items-center gap-[26px] bg-[#1f1f1f] pl-3 text-[21px] text-[#eee]`}>
        {menus.map((m) => (
          <button key={m}>{m}</button>
        ))}
      </nav>
      <div className={`${BODY_FONT} flex min-h-0 flex-1`}>
        <Outline />
        <main className="flex min-w-0 flex-1 flex-col">
          <Document />
          <div className="flex h-[59px] shrink-0 items-center border-t-2 border-[#757575] pr-12 pl-[25px] text-[24px] text-[#999c9f]">
            <button aria-label="收起侧边栏">
              <svg viewBox="0 0 13 22" className="w-[13px]" fill="none" stroke="currentColor" strokeWidth="3">
                <path d="M11.500 1.500L2 11l9.500 9.500" />
              </svg>
            </button>
            <button aria-label="源代码模式" className="ml-[41px]">
              <svg viewBox="0 0 30 22" className="w-[30px]" fill="none" stroke="currentColor" strokeWidth="2.200">
                <path d="M9 3L1.500 11 9 19M21 3l7.500 8-7.500 8M18 0l-6 22" />
              </svg>
            </button>
            <span className="ml-auto">7900 词</span>
          </div>
        </main>
      </div>
    </section>
  );
}

function SystemTray() {
  const cell = "flex w-[30px] items-center justify-center";
  return (
    <div className="ml-auto flex">
      <button aria-label="显示隐藏的图标" className={cell}>
        <svg viewBox="0 0 16 10" className="w-4" fill="none" stroke="#fff" strokeWidth="1.500">
          <path d="M.5 9L8 1.500 15.500 9" />
        </svg>
      </button>
      <span className={cell}>
        <svg viewBox="0 0 20 20" className="w-5" fill="none" stroke="#fff" strokeWidth="1.300">
          <path d="M12 17.500L1 16V2.500L19.500 1v11" />
          <path d="M6 8a4 4 0 0 1 7-1.500V4M13 9a4 4 0 0 1-6.500 2.500V14" />
          <circle cx="15.500" cy="15.500" r="4.500" fill="#2a6fc0" stroke="none" />
        </svg>
      </span>
      <span className={cell}>
        <svg viewBox="0 0 20 20" className="w-5">
          <path d="M9 0c2.500 2 5.500 2.500 8.500 2.500 0 8-2 12-8.500 15.500C2.500 14.500.5 10.500.5 2.500 3.500 2.500 6.500 2 9 0z" fill="#fff" />
          <path d="M9 0v18M1 8.500h16" stroke="#201e1c" strokeWidth="1.400" />
          <circle cx="14.500" cy="14.500" r="5.500" fill="#e02a2f" />
          <path d="M12.500 12.500l4 4M16.500 12.500l-4 4" stroke="#fff" strokeWidth="1.500" />
        </svg>
      </span>
      <span className={cell}>
        <svg viewBox="0 0 16 20" className="w-4" fill="none" stroke="#fff" strokeWidth="1.300">
          <path d="M3 1h8v5H3zM1 6h10.500v13H1zM5 3.500h1M8 3.500h1" />
          <path d="M9 16l3 3 4-5" stroke="#999" />
        </svg>
      </span>
      <span className={cell}>
        <svg viewBox="0 0 18 18" className="w-[18px]" fill="none" stroke="#aaa" strokeWidth="1.400">
          <path d="M1 17C1 8 8 1.500 17 1.500M5 17C5 10.500 10 6 17 6M9 17c0-4 3-7 8-7" />
          <circle cx="15" cy="15" r="2" fill="#fff" stroke="none" />
        </svg>
      </span>
      <span className={cell}>
        <svg viewBox="0 0 20 18" className="w-5" fill="none" stroke="#fff" strokeWidth="1.400">
          <path d="M1 6h3l5-4.500v15L4 12H1zM11.500 6.500c1.200 1.500 1.200 3.500 0 5" />
          <path d="M14 4c2.500 3 2.500 7 0 10M17 1.500c3.500 4.500 3.500 10.500 0 15" stroke="#777" />
        </svg>
      </span>
      <span className={`${cell} text-[18px] font-medium`}>英</span>
      <span className="flex w-[42px] items-center justify-center">
        <SogouLogo className="w-5" />
      </span>
      <div className="ml-[7px] flex w-[79px] flex-col justify-center text-center text-[16px] leading-[23px]">
        <time>20:56</time>
        <time>2025/5/24</time>
      </div>
      <button aria-label="通知" className="mt-[6px] ml-[21px] flex w-[30px] items-center">
        <svg viewBox="0 0 30 30" className="w-[30px]">
          <path d="M0 0h20v17H9l-4 4v-4H0z" fill="#fff" />
          <path d="M4 5h12M4 9h12M4 13h8" stroke="#201e1c" strokeWidth="1.500" />
          <circle cx="19.500" cy="19.500" r="10" fill="#2b2927" stroke="#999" />
          <text x="19.500" y="25" textAnchor="middle" fontSize="15" fontWeight="700" fontFamily="Noto Sans" fill="#fff">
            1
          </text>
        </svg>
      </button>
      <span className="mr-[5px] ml-4 w-px bg-[#888]" />
    </div>
  );
}

function InputMethodBar() {
  return (
    <div className={`${UI_FONT} absolute top-[115px] right-0 flex h-[30px] w-[202px] items-end`}>
      <SogouLogo className="relative z-10 -mr-4 h-[30px] w-8 shrink-0" />
      <div className="flex h-[26px] flex-1 items-center border border-[#b9cfe6] bg-white pl-5 text-[14px] font-bold text-[#0b76d8]">
        英
        <svg viewBox="0 0 12 10" className="ml-3 w-3" fill="currentColor">
          <circle cx="2" cy="2" r="2" />
          <path d="M8 4h3.500c.5 3-1 5-3.500 6l-.5-1c1-.6 1.500-1.300 1.500-2H8z" />
        </svg>
        <svg viewBox="0 0 12 16" className="ml-3 w-3" fill="none" stroke="currentColor" strokeWidth="1.700">
          <rect x="3.500" y=".5" width="5" height="9" rx="2.500" fill="currentColor" />
          <path d="M1 7c0 6 10 6 10 0M6 12v4M4 15.500h4" />
        </svg>
        <svg viewBox="0 0 15 13" className="ml-[11px] w-[15px]" fill="none" stroke="currentColor" strokeWidth="1.800">
          <rect x="1" y="1" width="13" height="11" rx="1" />
          <path d="M1 4.500h13M1 7.500h13M4.500 1v7M8 1v7M11 1v7M4 10h7" strokeWidth="1" />
        </svg>
        <svg viewBox="0 0 18 18" className="-mt-1 ml-[9px] w-[18px]">
          <defs>
            <linearGradient id="shirt" x1="0" y1="0" x2="0" y2="1">
              <stop offset="0" stopColor="#f5727f" />
              <stop offset=".5" stopColor="#a77bf5" />
              <stop offset="1" stopColor="#5ab8fb" />
            </linearGradient>
          </defs>
          <path d="M0 7l4-2c1.500 2 5 2 6.500 0l4 2v4h-2.500v7h-9v-7H0z" fill="url(#shirt)" />
          <circle cx="15" cy="3" r="3" fill="#ff5a36" />
        </svg>
        <svg viewBox="0 0 13 13" className="ml-[7px] w-[13px]" fill="currentColor">
          <rect width="6" height="6" rx="1.500" />
          <circle cx="10" cy="3" r="2.300" fill="none" stroke="currentColor" strokeWidth="1.500" />
          <rect y="7" width="6" height="6" rx="1.500" />
          <rect x="7" y="7" width="6" height="6" rx="1.500" />
        </svg>
        <svg viewBox="0 0 21 20" className="ml-[7px] w-[21px]">
          <circle cx="9.500" cy="10" r="9.500" fill="#f1eeec" />
          <path d="M1 7l13-2 .5 5-13 1z" fill="#e8651f" />
          <path d="M4 8h2M9 7h2" stroke="#222" strokeWidth="1.500" />
          <path d="M7 12l4 1-3 3z" fill="#222" />
          <path d="M19 4l1 3 1 .5-1 .5-1 3-1-3-1-.5 1-.5z" fill="#ffd02e" />
        </svg>
      </div>
    </div>
  );
}

export default function App() {
  return (
    <div className="relative flex h-screen min-h-[1600px] w-full overflow-hidden bg-white" lang="zh-CN">
      <div className="flex w-3/7 min-w-0 flex-col pt-[637px]">
        <BrowserWindow />
        <Taskbar>
          <div className="ml-auto flex flex-col justify-center pr-[7px] text-center text-[12px] leading-[19px]">
            <time>20:56</time>
            <time>2025/5/24</time>
          </div>
        </Taskbar>
      </div>
      <div className="flex w-4/7 min-w-0 flex-col">
        <TyporaWindow />
        <Taskbar large>
          <SystemTray />
        </Taskbar>
      </div>
      <InputMethodBar />
    </div>
  );
}
